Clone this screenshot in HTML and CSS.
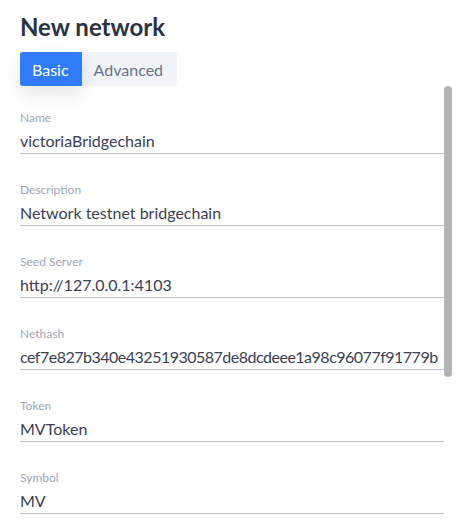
FILE: index.html
```html
<!DOCTYPE html>
<html>
<head>
<meta charset="utf-8">
<link rel="stylesheet" href="styles.css">
</head>
<body>
<div class="page">
  <h1 class="title">New network</h1>
  <div class="tabs">
    <button class="tab tab-active">Basic</button>
    <button class="tab">Advanced</button>
  </div>
  <div class="content-row">
    <div class="scroller">
      <div class="field"><div class="label">Name</div><div class="value">victoriaBridgechain</div></div>
      <div class="field"><div class="label">Description</div><div class="value">Network testnet bridgechain</div></div>
      <div class="field"><div class="label">Seed Server</div><div class="value">http://127.0.0.1:4103</div></div>
      <div class="field"><div class="label">Nethash</div><div class="value value-hash">cef7e827b340e43251930587de8dcdeee1a98c96077f91779b</div></div>
      <div class="field"><div class="label">Token</div><div class="value">MVToken</div></div>
      <div class="field"><div class="label">Symbol</div><div class="value">MV</div></div>
    </div>
    <div class="scrollbar"><div class="thumb"></div></div>
  </div>
</div>
</body>
</html>
```
FILE: styles.css
```css
html, body {
  margin: 0;
  padding: 0;
  background: #ffffff;
  overflow: hidden;
}
body {
  font-family: Lato, "Noto Sans", sans-serif;
  width: 456px;
  height: 523px;
}
.page {
  display: flex;
  flex-direction: column;
  height: 523px;
  padding-top: 13px;
  box-sizing: border-box;
}
.title {
  margin: 0 0 11px 20px;
  font-size: 24px;
  line-height: 28px;
  font-weight: 700;
  color: #2a3345;
}
.tabs {
  display: flex;
  margin-left: 20px;
  align-self: flex-start;
  background: #f0f3f7;
  border-radius: 3px;
  height: 34px;
  position: relative;
  z-index: 1;
}
.tab {
  border: 0;
  margin: 0;
  font-family: inherit;
  font-size: 16px;
  padding: 0 14px 0 12px;
  background: transparent;
  color: #6c7487;
  border-radius: 3px;
  cursor: pointer;
}
.tab-active {
  padding: 0 13px 0 12px;
  background: #2f7cf6;
  color: #ffffff;
  border-radius: 3px 0 0 3px;
  box-shadow: 0 8px 18px rgba(0, 0, 0, 0.10);
}
.content-row {
  flex: 1;
  display: flex;
  margin-left: 20px;
  width: 432px;
  min-height: 0;
}
.scroller {
  flex: 1;
  overflow: hidden;
  padding-top: 25px;
  box-sizing: border-box;
}
.scrollbar {
  width: 8px;
  flex: none;
}
.thumb {
  height: 291px;
  background: #b3b3b3;
  border-radius: 4px;
}
.field {
  margin-bottom: 29px;
}
.label {
  font-size: 12px;
  line-height: 14px;
  color: #9fa7b8;
  margin-bottom: 4px;
}
.value {
  font-size: 16px;
  line-height: 23px;
  padding-bottom: 1px;
  height: 23px;
  color: #3b4152;
  border-bottom: 1px solid #b9c0ce;
  white-space: nowrap;
  overflow: hidden;
}
.value-hash {
  letter-spacing: -0.5px;
}
```
